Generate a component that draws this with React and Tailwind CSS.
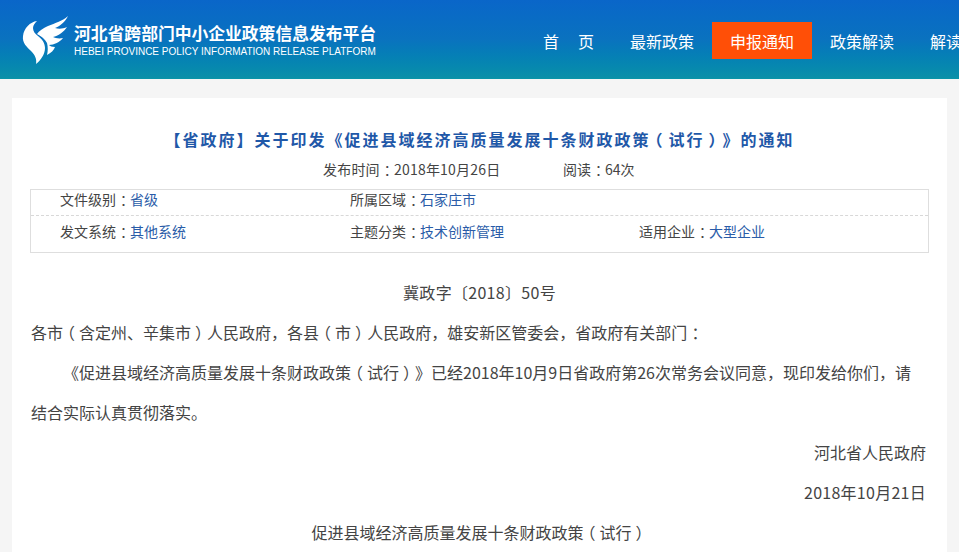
import React from "react";

const cjk = "font-['Microsoft_YaHei','Noto_Sans_CJK_SC',sans-serif]";

// the reference font centres these marks in their em box
function T({ children }) {
	return children.split(/([（）：])/).map((s, i) => {
		if (s === "（") return <span key={i} className="inline-block -translate-x-[0.25em] indent-0">{s}</span>;
		if (s === "）") return <span key={i} className="inline-block translate-x-[0.25em] indent-0">{s}</span>;
		if (s === "：") return <span key={i} className="inline-block translate-x-[0.28em] indent-0">{s}</span>;
		return s;
	});
}

function Logo() {
	return (
		<svg width="48" height="50" viewBox="22 14 48 50" className="shrink-0" fill="#fff">
			<path d="M37 21C30 22 24 28 23 36C22 43 27 47 31 51C35 55 37 59 36 64C41 60 45 54 45 48C45 43 42 39 38 36C35 34 33 31 33 28C33 25 35 23 37 21Z" />
			<path d="M68 16C63 21 55 23 48 26C43 28 39 31 37 34C41 36 45 39 47 43C48 47 48 51 47 55C51 53 54 50 55 47C52 47 50 46 49 45C54 45 60 42 63 38C59 39 55 38 53 37C58 36 64 32 67 27C63 29 58 29 55 28C60 26 65 22 68 16Z" />
		</svg>
	);
}

function Header() {
	return (
		<header className="flex h-[79px] items-start bg-gradient-to-b from-[#0a66c9] via-[#0a72bf] to-[#0b90a8] border-b border-[#0a94a8]">
			<div className="flex w-[512px] shrink-0 items-center pl-[22px] pt-[14px]">
				<Logo />
				<div className="ml-[4px] w-[304px] pt-[1px] text-white">
					<div className={`${cjk} whitespace-nowrap text-[16.8px] font-bold leading-[22px]`}>河北省跨部门中小企业政策信息发布平台</div>
					<div className="mt-[1px] whitespace-nowrap font-['Liberation_Sans',sans-serif] text-[10px] leading-[13px]">HEBEI PROVINCE POLICY INFORMATION RELEASE PLATFORM</div>
				</div>
			</div>
			<nav className={`${cjk} mt-[22px] flex shrink-0 text-[16px] text-white`}>
				<a className="flex h-[37px] w-[100px] items-center gap-[19px] pl-[31px]"><span>首</span><span>页</span></a>
				<a className="flex h-[37px] w-[100px] items-center pl-[18px]">最新政策</a>
				<a className="flex h-[37px] w-[100px] items-center bg-[#ff4f07] pl-[18px]">申报通知</a>
				<a className="flex h-[37px] w-[100px] items-center pl-[18px]">政策解读</a>
				<a className="flex h-[37px] w-[100px] items-center pl-[18px]">解读</a>
			</nav>
		</header>
	);
}

function Info({ label, value, className }) {
	return (
		<div className={`${className} whitespace-nowrap`}>
			<T>{label + "："}</T><a className="text-[#2a5ca8]">{value}</a>
		</div>
	);
}

export default function App() {
	return (
		<div className={`${cjk} h-[552px] w-[959px] overflow-hidden bg-[#f5f5f5] [text-spacing-trim:space-all]`}>
			<Header />
			<main className="mx-[12px] mt-[19px] bg-white px-[18px] pt-[29px]">
				<h1 className="whitespace-nowrap text-center text-[16px] font-bold leading-[24px] tracking-[2px] text-[#1f58a8]"><T>【省政府】关于印发《促进县域经济高质量发展十条财政政策（试行）》的通知</T></h1>
				<div className="mt-[8px] flex h-[20px] items-center text-[14px] text-[#444]">
					<span className="ml-[293px] w-[240px] tracking-[0.2px]"><T>发布时间：2018年10月26日</T></span>
					<span><T>阅读：64次</T></span>
				</div>
				<div className="mt-[10px] h-[64px] border border-[#dedede] text-[14px] text-[#444]">
					<div className="flex h-[26px] items-center border-b border-dashed border-[#d8d8d8] pb-[6px] pl-[29px]">
						<Info className="w-[290px]" label="文件级别" value="省级" />
						<Info label="所属区域" value="石家庄市" />
					</div>
					<div className="flex h-[30px] items-center pl-[29px]">
						<Info className="w-[290px]" label="发文系统" value="其他系统" />
						<Info className="w-[289px]" label="主题分类" value="技术创新管理" />
						<Info label="适用企业" value="大型企业" />
					</div>
				</div>
				<div className="mt-[19px] text-[16px] leading-[40px] text-[#444]">
					<p className="text-center tracking-[0.3px]">冀政字〔2018〕50号</p>
					<p className="pl-[1px]"><T>各市（含定州、辛集市）人民政府，各县（市）人民政府，雄安新区管委会，省政府有关部门：</T></p>
					<p className="pl-[1px] pr-[10px] indent-[32px]"><T>《促进县域经济高质量发展十条财政政策（试行）》已经2018年10月9日省政府第26次常务会议同意，现印发给你们，请结合实际认真贯彻落实。</T></p>
					<p className="pr-[3px] text-right">河北省人民政府</p>
					<p className="pr-[3px] text-right tracking-[0.27px]">2018年10月21日</p>
					<p className="text-center"><T>促进县域经济高质量发展十条财政政策（试行）</T></p>
				</div>
			</main>
		</div>
	);
}
